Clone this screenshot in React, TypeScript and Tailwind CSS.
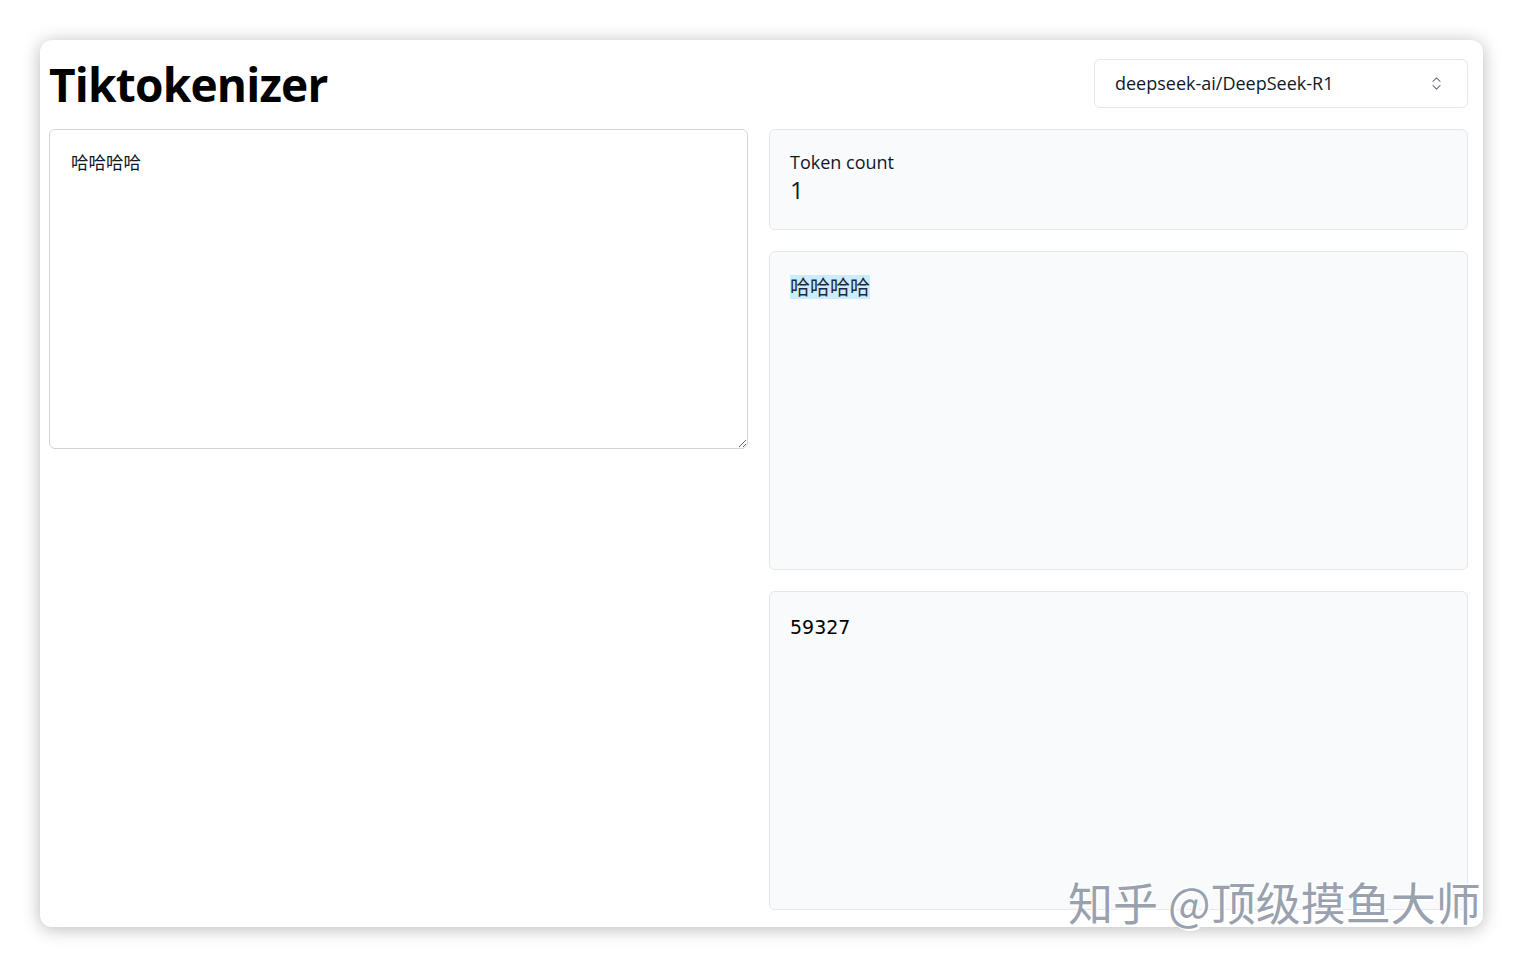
import React from "react";
import { ChevronsUpDown } from "lucide-react";

export default function App() {
  const sans = { fontFamily: '"Open Sans", "Noto Sans CJK SC", sans-serif' };
  return (
    <div className="w-[1523px] h-[967px] bg-white pt-[40px] pl-[40px] relative overflow-hidden" style={sans}>
      <div className="w-[1443px] h-[887px] rounded-xl bg-white shadow-[0_2px_18px_rgba(0,0,0,0.28)] pl-[9px] pr-[15px] pt-[19px]">
        <div className="flex items-center justify-between h-[49px]">
          <h1 className="text-[46px] font-bold tracking-[-0.8px] text-black leading-none">Tiktokenizer</h1>
          <div className="w-[374px] h-[49px] border border-gray-200 rounded-md flex items-center justify-between pl-[20px] pr-[22px] text-[18px] text-gray-900">
            <span>deepseek-ai/DeepSeek-R1</span>
            <ChevronsUpDown className="w-[17px] h-[17px] text-gray-500" strokeWidth={1.5} />
          </div>
        </div>
        <div className="grid grid-cols-2 gap-[21px] mt-[21px]">
          <div>
            <textarea
              className="w-full h-[320px] border border-gray-300 rounded-md px-[21px] py-[20px] text-[17.5px] leading-[24px] text-gray-900 outline-none resize-y block"
              style={{ fontFamily: '"Noto Sans CJK SC", sans-serif' }}
              defaultValue="哈哈哈哈"
            />
          </div>
          <div className="flex flex-col gap-[21px]">
            <div className="h-[101px] bg-slate-50 border border-gray-200 rounded-md px-[20px] pt-[19px]">
              <div className="text-[18px] leading-[26px] text-gray-900">Token count</div>
              <div className="text-[24px] leading-[30px] text-gray-900">1</div>
            </div>
            <div className="h-[319px] bg-slate-50 border border-gray-200 rounded-md px-[20px] pt-[23px]">
              <span className="bg-sky-200/70 text-[20px] leading-[24px] text-gray-800 inline-block" style={{ fontFamily: '"Noto Sans CJK SC", sans-serif' }}>哈哈哈哈</span>
            </div>
            <div className="h-[319px] bg-slate-50 border border-gray-200 rounded-md px-[20px] pt-[21px]">
              <div className="text-[19px] leading-[28px] text-black" style={{ fontFamily: '"DejaVu Sans", sans-serif' }}>59327</div>
            </div>
          </div>
        </div>
      </div>
      <div
        className="absolute left-[1068px] top-[879px] text-[45px] leading-none text-gray-400 whitespace-nowrap"
        style={{ fontFamily: '"Noto Sans CJK SC", sans-serif', textShadow: "2px 2px 0 #ffffff, -1px -1px 0 #ffffff" }}
      >
        知乎 @顶级摸鱼大师
      </div>
    </div>
  );
}
